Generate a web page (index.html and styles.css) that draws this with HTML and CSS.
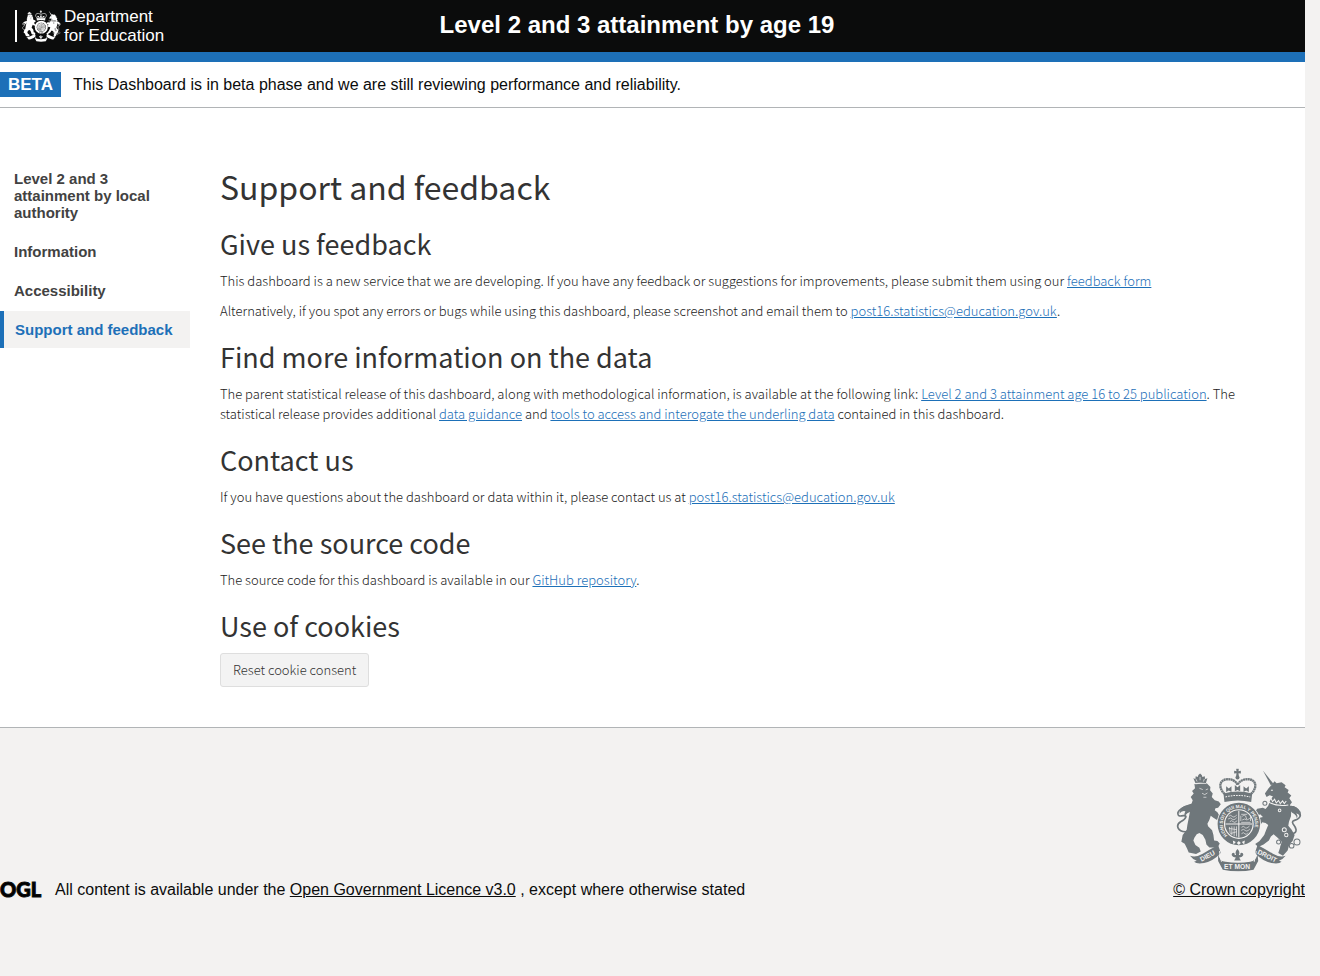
FILE: index.html
```html
<!DOCTYPE html>
<html lang="en">
<head>
<meta charset="utf-8">
<title>Level 2 and 3 attainment by age 19</title>
<meta name="viewport" content="width=device-width, initial-scale=1">
<link rel="stylesheet" href="styles.css">
</head>
<body>
<svg class="sprite" aria-hidden="true">
  <symbol id="crest" viewBox="34 22 380 310">
    <!-- lion -->
    <path d="M92 66l-6-14 6 2 1-8 6 2 2-6 5-4 5 4 2 6 7-2 1 8 7-2-5 16q-16-4-31-2z" fill="currentColor"/>
    <path d="M89 69L126 67 137 78 136 88 144 98 141 108 150 118 162 122 168 130 160 140 152 142 150 148 158 154 166 168 158 178 146 170 138 164 134 176 128 188 130 196 142 208 146 222 148 238 158 240 165 247 158 259 134 259 125 250 122 236 114 222 104 216 96 220 89 230 86 238 92 252 104 260 108 271 94 279 72 274 67 262 60 248 50 242 54 222 66 206 68 192 72 172 76 150 80 130 84 118 78 108 87 98 82 90 91 82z" fill="currentColor"/>
    <path d="M66 212C38 214 32 192 48 182C66 172 68 162 56 164C44 166 38 166 40 154C46 140 66 136 82 130" fill="none" stroke="currentColor" stroke-width="5"/>
    <path d="M44 158q4-24 24-25l18-4q-2 22-18 28-6 4-8 12-4-8 2-18-10-4-18 7z" fill="currentColor"/>
    <g fill="none" stroke="var(--crest-bg)" stroke-width="2">
      <path d="M92 69q16-4 33-1M104 82l10 4M130 84l-7 3M112 97l8 4 8-5M116 109h9M94 55l3 7M106 48v10M119 54l-3 8"/>
    </g>
    <!-- unicorn -->
    <path d="M294 29l31 39-7 6z" fill="currentColor"/>
    <path d="M300 98L311 82 320 72 329 61 335 67 350 64 362 73 359 79 371 87 368 95 379 104 373 112 381 124 375 132 379 146 378 166 372 182 370 194 380 206 389 222 383 240 373 250 368 268 354 284 340 276 346 258 350 242 338 230 326 220 318 226 312 238 296 250 280 258 271 249 284 240 298 222 304 206 310 192 302 186 292 184 285 194 273 184 279 172 294 168 286 160 276 166 268 156 277 143 294 140 302 144 310 134 316 118 324 106 314 103 305 108z" fill="currentColor"/>
    <path d="M380 218C402 216 392 198 384 188C376 174 402 182 406 164C408 148 394 140 376 136" fill="none" stroke="currentColor" stroke-width="5"/>
    <path d="M406 168q0-26-20-33l-14 0q2 18 16 24 8 6 8 14 4-8-2-16 8 2 12 11z" fill="currentColor"/>
    <g fill="none" stroke="var(--crest-bg)" stroke-width="3">
      <path d="M318 88h6M312 124q26 14 58 8M318 112l5 10 6-7 5 11 7-7 5 9 7-8 5 8 6-8"/>
      <circle cx="344" cy="148" r="4"/><circle cx="358" cy="206" r="6"/><circle cx="364" cy="222" r="5"/>
    </g>
    <g fill="none" stroke="currentColor" stroke-width="3">
      <circle cx="300" cy="127" r="6"/><circle cx="341" cy="243" r="6"/><circle cx="353" cy="257" r="5"/><circle cx="380" cy="254" r="7"/><circle cx="396" cy="243" r="9"/>
    </g>
    <!-- crown -->
    <g fill="currentColor">
      <path d="M214 24h8l-1 7 7-1v8l-7-1 1 8h-8l1-8-7 1v-8l7 1z"/>
      <circle cx="218" cy="50" r="6"/>
      <path d="M176 98q43-12 86 0l-3 25q-40-9-80 0z"/>
      <path d="M184 76l8 7 8-7v17l-8-4-8 4zM210 72l8 7 8-7v19l-8-4-8 4zM236 76l8 7 8-7v17l-8-4-8 4z"/>
    </g>
    <g fill="none" stroke="currentColor" stroke-width="7" stroke-dasharray="6 1">
      <path d="M180 99C160 82 162 55 190 55C204 55 214 62 218 72"/>
      <path d="M258 99C278 82 276 55 248 55C234 55 222 62 218 72"/>
    </g>
    <path d="M182 108q36-9 74 0" fill="none" stroke="var(--crest-bg)" stroke-width="3" stroke-dasharray="5 3"/>
    <!-- garter and shield -->
    <circle cx="222" cy="189" r="66" fill="var(--crest-bg)"/>
    <circle cx="222" cy="189" r="54" fill="none" stroke="currentColor" stroke-width="19"/>
    <circle cx="222" cy="189" r="41" fill="currentColor"/>
    <g fill="none" stroke="var(--crest-bg)" stroke-width="3">
      <path d="M222 149v80M182 189h80"/>
      <path stroke-width="2" d="M192 166q6-6 10 0t14-4M190 174q8-6 12 0t14-4M195 182q6-6 10 0t12-3M229 160h18M229 184h28M232 166q10-8 12 4t12 0M232 177q8-6 14 0M228 164v16M257 166v14M194 198l2 18M201 196v26M208 196v30M215 196v30M192 202l24 4M196 218l20-6M230 199q6-6 10 0t14-4M229 208q8-6 12 0t14-4M230 218q6-6 10 0t9-3"/>
    </g>
    <path d="M204 238l9 5-7 7zM222 240l6 6-6 6-6-6zM240 238l-9 5 7 7z" fill="var(--crest-bg)"/>
    <!-- scroll -->
    <g fill="currentColor">
      <path d="M76 284q18 6 38-6t46-26l8 24q-22 24-50 30-22 4-30-4l8-3q-12-4-20-15z"/>
      <path d="M362 284q-18 6-38-6t-46-26l-8 24q22 24 50 30 22 4 30-4l-8-3q12-4 20-15z"/>
      <path d="M160 278q4 24 22 24 38 6 74 0 18-2 22-24l2 22-14 26q-46 9-92 0l-14-26z"/>
      <path d="M218 264q9 9 4 18l4 0q0-9 7-6 6 6-3 12l-7 1 5 9h-20l5-9-7-1q-9-6-3-12 7-3 7 6h4q-5-9 4-18z"/>
    </g>
    <path d="M164 270l6 32M274 270l-6 32" stroke="var(--crest-bg)" stroke-width="3"/>
  </symbol>
</svg>

<header class="header">
  <a class="logo" href="#" aria-label="Department for Education">
    <svg class="logo-crest" aria-hidden="true"><use href="#crest"/></svg>
    <span class="logo-text">Department<br>for Education</span>
  </a>
  <div class="header-title">Level 2 and 3 attainment by age 19</div>
</header>

<div class="phase-banner">
  <strong class="phase-tag">BETA</strong>
  <span>This Dashboard is in beta phase and we are still reviewing performance and reliability.</span>
</div>

<div class="layout">
  <nav class="sidebar" aria-label="Dashboard pages">
    <a class="nav-link" href="#">Level 2 and 3 attainment by local authority</a>
    <a class="nav-link" href="#">Information</a>
    <a class="nav-link" href="#">Accessibility</a>
    <a class="nav-link nav-link-active" href="#" aria-current="page">Support and feedback</a>
  </nav>
  <main class="content">
    <h1>Support and feedback</h1>
    <h2>Give us feedback</h2>
    <p>This dashboard is a new service that we are developing. If you have any feedback or suggestions for improvements, please submit them using our <a href="#">feedback form</a></p>
    <p>Alternatively, if you spot any errors or bugs while using this dashboard, please screenshot and email them to <a href="#">post16.statistics@education.gov.uk</a>.</p>
    <h2>Find more information on the data</h2>
    <p>The parent statistical release of this dashboard, along with methodological information, is available at the following link: <a href="#">Level 2 and 3 attainment age 16 to 25 publication</a>. The statistical release provides additional <a href="#">data guidance</a> and <a href="#">tools to access and interogate the underling data</a> contained in this dashboard.</p>
    <h2>Contact us</h2>
    <p>If you have questions about the dashboard or data within it, please contact us at <a href="#">post16.statistics@education.gov.uk</a></p>
    <h2>See the source code</h2>
    <p>The source code for this dashboard is available in our <a href="#">GitHub repository</a>.</p>
    <h2>Use of cookies</h2>
    <button class="button" type="button">Reset cookie consent</button>
  </main>
</div>

<footer class="footer">
  <div class="licence">
    <svg class="ogl" viewBox="0 0 42 18" role="img" aria-label="Open Government Licence"><text x="0" y="16">OGL</text></svg>
    <span>All content is available under the <a href="#">Open Government Licence v3.0</a> , except where otherwise stated</span>
  </div>
  <a class="copyright" href="#">
    <svg class="footer-crest" viewBox="34 22 380 310" aria-hidden="true">
      <use href="#crest" x="34" y="22" width="380" height="310"/>
      <defs>
        <path id="garter" d="M188 223A48 48 0 1 1 256 223"/>
      </defs>
      <g class="crest-motto">
        <text class="crest-garter"><textPath href="#garter">HONI SOIT QUI MAL Y PENSE</textPath></text>
        <text transform="translate(110 302) rotate(-28)">DIEU</text>
        <text x="178" y="324">ET MON</text>
        <text transform="translate(276 277) rotate(26)">DROIT</text>
      </g>
    </svg>
    <span>© Crown copyright</span>
  </a>
</footer>
</body>
</html>
```
FILE: styles.css
```css
* {
  box-sizing: border-box;
}

html {
  background: #f3f2f1;
}

body {
  margin: 0 15px 0 0;
  color: #0b0c0c;
  font: 16px/20px "Liberation Sans", Arial, sans-serif;
}

.sprite {
  display: none;
}

.header {
  display: flex;
  align-items: center;
  height: 62px;
  padding: 0 14px;
  border-bottom: 10px solid #1d70b8;
  background: #0b0c0c;
  color: #fff;
}

.logo {
  display: flex;
  align-items: center;
  width: 33.33%;
  color: #fff;
  text-decoration: none;
}

.logo-crest {
  --crest-bg: #0b0c0c;
  width: 46px;
  height: 32px;
  margin-left: 1px;
  padding-left: 5px;
  border-left: 2px solid #fff;
}

.logo-text {
  margin-left: 3px;
  font-size: 17px;
  line-height: 19px;
}

.header-title {
  padding-bottom: 2px;
  font-size: 24px;
  font-weight: 700;
  line-height: 30px;
}

.phase-banner {
  display: flex;
  align-items: center;
  gap: 12px;
  padding: 10px 0;
  border-bottom: 1px solid #b1b4b6;
  background: #fff;
}

.phase-tag {
  padding: 0 8px;
  background: #1d70b8;
  color: #fff;
  font-size: 17px;
  line-height: 25px;
}

.layout {
  display: flex;
  align-items: flex-start;
  gap: 30px;
  padding: 52px 15px 40px 0;
  background: #fff;
}

.sidebar {
  display: flex;
  flex: none;
  flex-direction: column;
  gap: 2px;
  width: 190px;
}

.nav-link {
  padding: 10px 14px;
  color: #424242;
  font-size: 15px;
  font-weight: 700;
  line-height: 17px;
  text-decoration: none;
}

.nav-link-active {
  padding-left: 11px;
  border-left: 4px solid #1d70b8;
  background: #f3f2f1;
  color: #1d70b8;
}

.content {
  flex: 1;
  min-width: 0;
  padding-top: 8px;
  color: #222;
  font-family: "Noto Sans CJK SC", sans-serif;
  font-size: 13px;
  font-weight: 300;
  line-height: 20px;
}

.content h1,
.content h2 {
  color: #333;
  font-weight: 400;
}

.content h1 {
  margin: 0 0 24px;
  font-size: 32px;
  line-height: 36px;
}

.content h2 {
  margin: 20px 0 12px;
  font-size: 27px;
  line-height: 31px;
}

.content p {
  margin: 0 0 10px;
}

.content a {
  color: #1d70b8;
}

.button {
  display: block;
  padding: 6px 12px;
  border: 1px solid #dedede;
  border-radius: 3px;
  background: #f3f3f3;
  color: #333;
  font: inherit;
}

.footer {
  display: flex;
  align-items: flex-end;
  justify-content: space-between;
  padding: 40px 0;
  border-top: 1px solid #b1b4b6;
}

.footer a {
  color: inherit;
}

.licence {
  display: flex;
  align-items: center;
  gap: 13px;
}

.ogl {
  width: 42px;
  height: 18px;
  overflow: visible;
}

.ogl text {
  font: 900 20px Lato, sans-serif;
  stroke: currentColor;
  stroke-width: 1px;
}

.copyright {
  display: flex;
  flex-direction: column;
  align-items: center;
  gap: 8px;
}

.footer-crest {
  --crest-bg: #f3f2f1;
  width: 127px;
  height: 104px;
}

.footer .footer-crest {
  color: #6f777b;
}

.crest-motto {
  fill: #f3f2f1;
  font: 700 20px "Liberation Sans", Arial, sans-serif;
}

.crest-garter {
  font-size: 14px;
}
```
